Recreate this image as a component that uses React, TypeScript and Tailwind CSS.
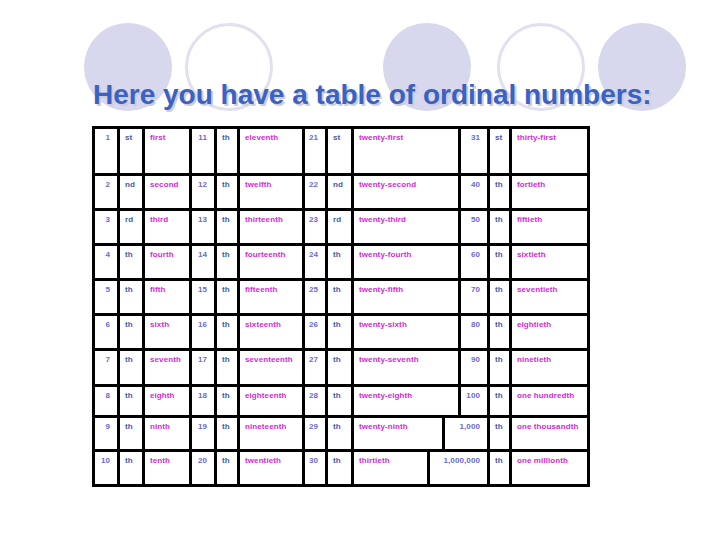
const rows = [
  ["1", "st", "first", "11", "th", "eleventh", "21", "st", "twenty-first", "31", "st", "thirty-first"],
  ["2", "nd", "second", "12", "th", "twelfth", "22", "nd", "twenty-second", "40", "th", "fortieth"],
  ["3", "rd", "third", "13", "th", "thirteenth", "23", "rd", "twenty-third", "50", "th", "fiftieth"],
  ["4", "th", "fourth", "14", "th", "fourteenth", "24", "th", "twenty-fourth", "60", "th", "sixtieth"],
  ["5", "th", "fifth", "15", "th", "fifteenth", "25", "th", "twenty-fifth", "70", "th", "seventieth"],
  ["6", "th", "sixth", "16", "th", "sixteenth", "26", "th", "twenty-sixth", "80", "th", "eightieth"],
  ["7", "th", "seventh", "17", "th", "seventeenth", "27", "th", "twenty-seventh", "90", "th", "ninetieth"],
  ["8", "th", "eighth", "18", "th", "eighteenth", "28", "th", "twenty-eighth", "100", "th", "one hundredth"],
  ["9", "th", "ninth", "19", "th", "nineteenth", "29", "th", "twenty-ninth", "1,000", "th", "one thousandth"],
  ["10", "th", "tenth", "20", "th", "twentieth", "30", "th", "thirtieth", "1,000,000", "th", "one millionth"],
];

// the big numbers at the bottom push the fourth block wider
const cols = "grid-cols-[25px_25px_47px_25px_23px_65px_23px_26px_107px_29px_22px_78px]";
const rowClass = [
  `h-[47px] ${cols}`,
  `h-[35px] ${cols}`,
  `h-[35px] ${cols}`,
  `h-[35px] ${cols}`,
  `h-[35px] ${cols}`,
  `h-[35px] ${cols}`,
  `h-[36px] ${cols}`,
  `h-[31px] ${cols}`,
  "h-[34px] grid-cols-[25px_25px_47px_25px_23px_65px_23px_26px_91px_45px_22px_78px]",
  "h-[35px] grid-cols-[25px_25px_47px_25px_23px_65px_23px_26px_76px_60px_22px_78px]",
];

const circles = [
  "left-[84px] bg-[#d7d7ee]",
  "left-[185px] border-[3px] border-[#e0e0ee]",
  "left-[383px] bg-[#d7d7ee]",
  "left-[497px] border-[3px] border-[#e0e0ee]",
  "left-[598px] bg-[#d7d7ee]",
];

const kinds = [
  "pr-[7px] text-right text-[#6a6ad6]",
  "pl-[5px] text-[#3f5aa8]",
  "pl-[5px] text-[#d42ad4]",
];

export default function App() {
  return (
    <div className="relative w-[720px] h-[540px] overflow-hidden bg-white [font-family:'Liberation_Sans',Arial,sans-serif]">
      {circles.map((c, i) => (
        <div key={i} className={`absolute top-[23px] w-[88px] h-[88px] rounded-full ${c}`} />
      ))}

      <div className="relative pt-[81px] pl-[93px]">
        <h1 className="text-[28px] leading-none font-bold text-[#3a62c2] whitespace-nowrap [text-shadow:2px_2px_0_#cdcdda]">
          Here you have a table of ordinal numbers:
        </h1>

        <div className="mt-[17px] -ml-px w-[498px] border-l-[3px] border-t-[3px] border-black bg-white text-[8px] leading-none font-bold tracking-[0.1px]">
          {rows.map((row, i) => (
            <div key={i} className={`grid border-b-[3px] border-black ${rowClass[i]}`}>
              {row.map((t, j) => (
                <div key={j} className={`border-r-[3px] border-black pt-[5px] whitespace-nowrap ${kinds[j % 3]}`}>
                  {t}
                </div>
              ))}
            </div>
          ))}
        </div>
      </div>
    </div>
  );
}
